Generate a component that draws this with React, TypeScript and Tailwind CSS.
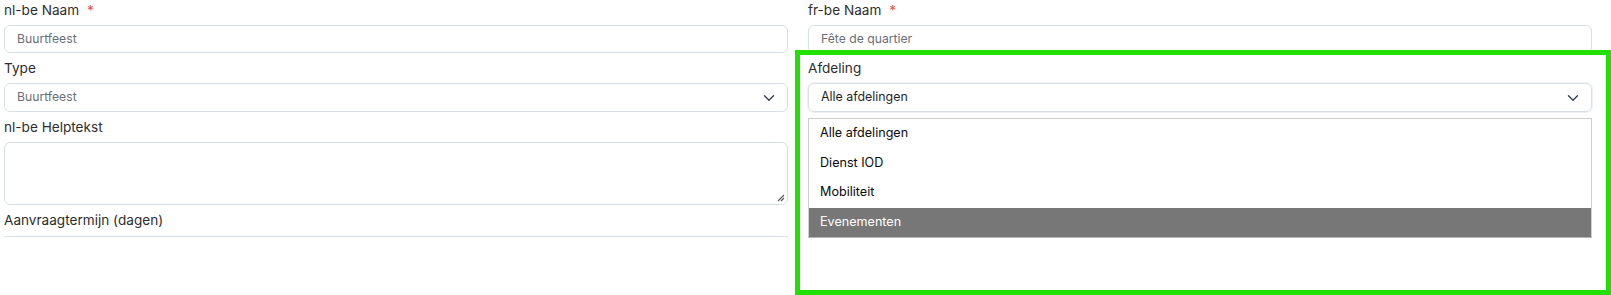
import React from "react";

const font = { fontFamily: "Inter, 'Noto Sans', sans-serif" };

function Chevron() {
  return (
    <svg width="12" height="8" viewBox="0 0 12 8" fill="none" className="shrink-0">
      <path d="M1.5 1.8 L6 6.2 L10.5 1.8" stroke="#374151" strokeWidth="1.4" strokeLinecap="round" strokeLinejoin="round" />
    </svg>
  );
}

function Label({ children, required }: { children: React.ReactNode; required?: boolean }) {
  return (
    <div className="h-5 flex items-center text-[13.6px] text-[#2d2d2d]">
      <span>{children}</span>
      {required && <span className="ml-2 text-[#e5533d]">*</span>}
    </div>
  );
}

function Input({ value }: { value: string }) {
  return (
    <div className="mt-[5px] h-[28px] rounded-md border border-[#d8e0e5] flex items-center px-3 text-[12.2px] text-[#6b6f75]">
      {value}
    </div>
  );
}

function Select({ value, dark }: { value: string; dark?: boolean }) {
  return (
    <div
      className={`mt-[5px] h-[29px] rounded-md border border-[#d8e0e5] flex items-center justify-between pl-3 pr-3 ${
        dark ? "text-[12.4px] text-[#1f1f1f] shadow-[0_0_0_1px_#eef2f8]" : "text-[12.2px] text-[#6b6f75]"
      }`}
    >
      <span>{value}</span>
      <Chevron />
    </div>
  );
}

export default function App() {
  const items = ["Alle afdelingen", "Dienst IOD", "Mobiliteit", "Evenementen"];
  return (
    <div className="relative w-[1611px] h-[295px] bg-white overflow-hidden" style={font}>
      <div className="grid grid-cols-2 gap-x-5 pl-1 pr-[19px]">
        <div className="flex flex-col gap-[5px]">
          <div>
            <Label required>nl-be Naam</Label>
            <Input value="Buurtfeest" />
          </div>
          <div>
            <Label>Type</Label>
            <Select value="Buurtfeest" />
          </div>
          <div>
            <Label>nl-be Helptekst</Label>
            <div className="relative mt-[5px] h-[63px] rounded-md border border-[#d8e0e5]">
              <svg width="9" height="9" viewBox="0 0 9 9" className="absolute right-[2px] bottom-[2px]">
                <path d="M8 2 L2 8 M8 5 L5 8" stroke="#555" strokeWidth="1.1" />
              </svg>
            </div>
          </div>
          <div>
            <Label>Aanvraagtermijn (dagen)</Label>
            <div className="mt-[6px] h-[2px] rounded-t-md border-t border-x border-[#d8e0e5]" />
          </div>
        </div>
        <div className="flex flex-col gap-[5px]">
          <div>
            <Label required>fr-be Naam</Label>
            <Input value="Fête de quartier" />
          </div>
          <div className="relative">
            <Label>Afdeling</Label>
            <Select value="Alle afdelingen" dark />
            <div className="absolute left-0 right-0 top-[60px] border border-[#cfcfcf] border-b-[#b5b5b5] bg-white">
              {items.map((it, i) => (
                <div
                  key={it}
                  className={`h-[29.5px] flex items-center px-[11px] text-[12.6px] ${
                    i === 3 ? "bg-[#777777] text-white" : "text-[#0a0a0a]"
                  }`}
                >
                  {it}
                </div>
              ))}
            </div>
          </div>
        </div>
      </div>
      <div className="absolute left-[795px] top-[50px] w-[816px] h-[245px] border-[5px] border-[#22e000] pointer-events-none" />
    </div>
  );
}
